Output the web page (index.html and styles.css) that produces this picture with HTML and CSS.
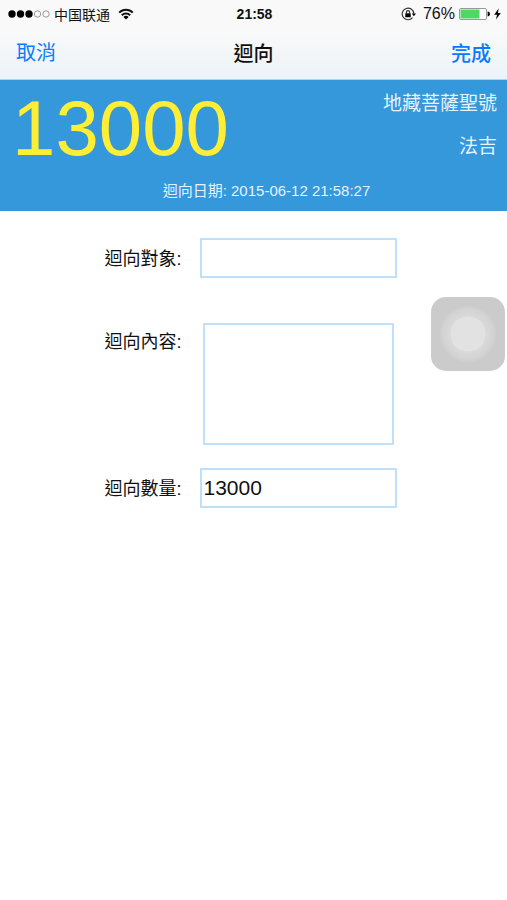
FILE: index.html
```html
<!DOCTYPE html>
<html lang="zh-Hant">
<head>
  <meta charset="UTF-8">
  <meta name="viewport" content="width=device-width, initial-scale=1.0">
  <title>迴向</title>
  <link rel="stylesheet" href="styles.css">
</head>
<body>
  <header class="top">
    <div class="status">
      <div class="status-left">
        <svg class="signal" width="42" height="10" viewBox="0 0 42 10">
          <circle cx="4" cy="5" r="3.7"/>
          <circle cx="12.5" cy="5" r="3.7"/>
          <circle cx="21" cy="5" r="3.7"/>
          <circle class="empty" cx="29.5" cy="5" r="3.2"/>
          <circle class="empty" cx="38" cy="5" r="3.2"/>
        </svg>
        <span class="carrier" lang="zh-Hans">中国联通</span>
        <svg class="wifi" width="16" height="12" viewBox="0 0 16 12">
          <path class="arc" d="M1.2 4.6 A9.6 9.6 0 0 1 14.8 4.6"/>
          <path class="arc" d="M3.8 7.2 A6 6 0 0 1 12.2 7.2"/>
          <path d="M8 11.6 L5.4 9 A3.7 3.7 0 0 1 10.6 9 Z"/>
        </svg>
      </div>
      <span class="time">21:58</span>
      <div class="status-right">
        <svg width="15" height="14" viewBox="0 0 15 14">
          <path class="ring" d="M11.5 10.6 A5.8 5.8 0 1 1 12.8 6.6"/>
          <path d="M10.8 6.4 H15 L12.9 9.2 Z"/>
          <rect x="4.3" y="6.3" width="5.4" height="4" rx="0.5"/>
          <path class="ring" d="M5.4 6.5 V5.2 A1.6 1.6 0 0 1 8.6 5.2 V6.5"/>
        </svg>
        <span class="percent">76%</span>
        <svg width="31" height="14" viewBox="0 0 31 14">
          <rect class="case" x="0.5" y="1.5" width="27" height="11" rx="1.5"/>
          <rect class="charge" x="1.5" y="2.5" width="19" height="9"/>
          <path d="M28.6 4.6 A2.4 2.4 0 0 1 28.6 9.4 Z"/>
        </svg>
        <svg width="7" height="12" viewBox="0 0 7 12">
          <path d="M4.6 0.5 L0.2 6.7 H3 L2 11.5 L6.8 4.9 H4 Z"/>
        </svg>
      </div>
    </div>
    <nav class="nav">
      <button type="button" class="nav-btn">取消</button>
      <h1>迴向</h1>
      <button type="submit" form="dedicate" class="nav-btn done">完成</button>
    </nav>
  </header>

  <section class="summary">
    <div class="summary-row">
      <div class="total">13000</div>
      <div class="names">
        <span>地藏菩薩聖號</span>
        <span>法吉</span>
      </div>
    </div>
    <p class="date">迴向日期: 2015-06-12 21:58:27</p>
  </section>

  <form id="dedicate" class="form">
    <label for="target">迴向對象:</label>
    <input type="text" id="target" name="target">

    <label for="content" class="content-label">迴向內容:</label>
    <textarea id="content" name="content"></textarea>

    <label for="amount">迴向數量:</label>
    <input type="text" id="amount" name="amount" value="13000">
  </form>

  <button type="button" class="assist" aria-label="AssistiveTouch"></button>
</body>
</html>
```
FILE: styles.css
```css
* { box-sizing: border-box; }

body {
  margin: 0;
  background: #fff;
  color: #111;
  font-family: "Liberation Sans", "Noto Sans CJK TC", sans-serif;
}

button { border: none; padding: 0; background: none; font-family: inherit; cursor: pointer; }
svg { display: block; }

/* top bar */
.top {
  background: linear-gradient(#f9f9f9 40%, #ecf3f8);
  border-bottom: 1px solid #b5d3e5;
}

.status {
  display: grid;
  grid-template-columns: 1fr auto 1fr;
  align-items: center;
  height: 27px;
  padding: 0 6px 0 8px;
  font-size: 15px;
}
.status-left, .status-right { display: flex; align-items: center; }
.status-left { gap: 4px; }
.status-right { gap: 4px; justify-content: flex-end; }
.carrier { font-family: "Noto Sans CJK SC", sans-serif; font-size: 14px; line-height: 20px; }
.wifi { margin-left: 4px; }
.time { font-weight: bold; font-size: 14px; }
.percent { margin-left: 3px; font-size: 16px; }
.signal .empty { fill: none; stroke: #999; }
.arc { fill: none; stroke: #111; stroke-width: 2; }
.ring { fill: none; stroke: #333; stroke-width: 1.2; }
.case { fill: #fff; stroke: #999; }
.charge { fill: #4cd964; }

.nav {
  display: grid;
  grid-template-columns: 1fr auto 1fr;
  align-items: center;
  height: 52px;
  padding: 0 16px;
}
.nav h1 { margin: 0; font-size: 20px; font-weight: 500; line-height: 28px; }
.nav-btn { justify-self: start; color: #0a7aff; font-size: 20px; line-height: 28px; }
.done { justify-self: end; font-weight: 500; }
.nav h1, .done { font-family: "Noto Sans CJK TC", sans-serif; }

/* blue summary */
.summary { padding: 6px 10px 9px 12px; background: #3498db; color: #e4f3ff; }
.summary-row { display: flex; justify-content: space-between; }
.total { color: #ffee33; font-size: 78px; line-height: 84px; }
.names { display: flex; flex-direction: column; gap: 15px; padding-top: 4px; text-align: right; font-size: 19px; line-height: 28px; }
.date { margin: 10px 0 0; padding-left: 24px; text-align: center; font-size: 15px; line-height: 22px; }

/* form */
.form {
  display: grid;
  grid-template-columns: 79px 197px;
  column-gap: 16px;
  justify-content: center;
  align-items: center;
  padding: 27px 6px 28px 0;
}
.form label { padding-top: 2px; font-size: 18px; line-height: 26px; white-space: nowrap; }
.form .content-label { align-self: start; margin-top: 49px; }
.form input, .form textarea {
  border: 2px solid #bfe0fa;
  border-radius: 0;
  background: #fff;
  color: #111;
  font-family: inherit;
  font-size: 21px;
  outline: none;
}
.form input { width: 100%; height: 40px; padding: 0 2px; }
.form textarea { height: 122px; margin: 45px 3px 23px; resize: none; }

/* floating touch button */
.assist {
  position: fixed;
  top: 297px;
  right: 2px;
  width: 74px;
  height: 74px;
  border-radius: 15px;
  background: radial-gradient(circle, #e2e2e2 17px, #d9d9d9 18px, #d3d3d3 25px, #cbcbcb 29px);
}
```
